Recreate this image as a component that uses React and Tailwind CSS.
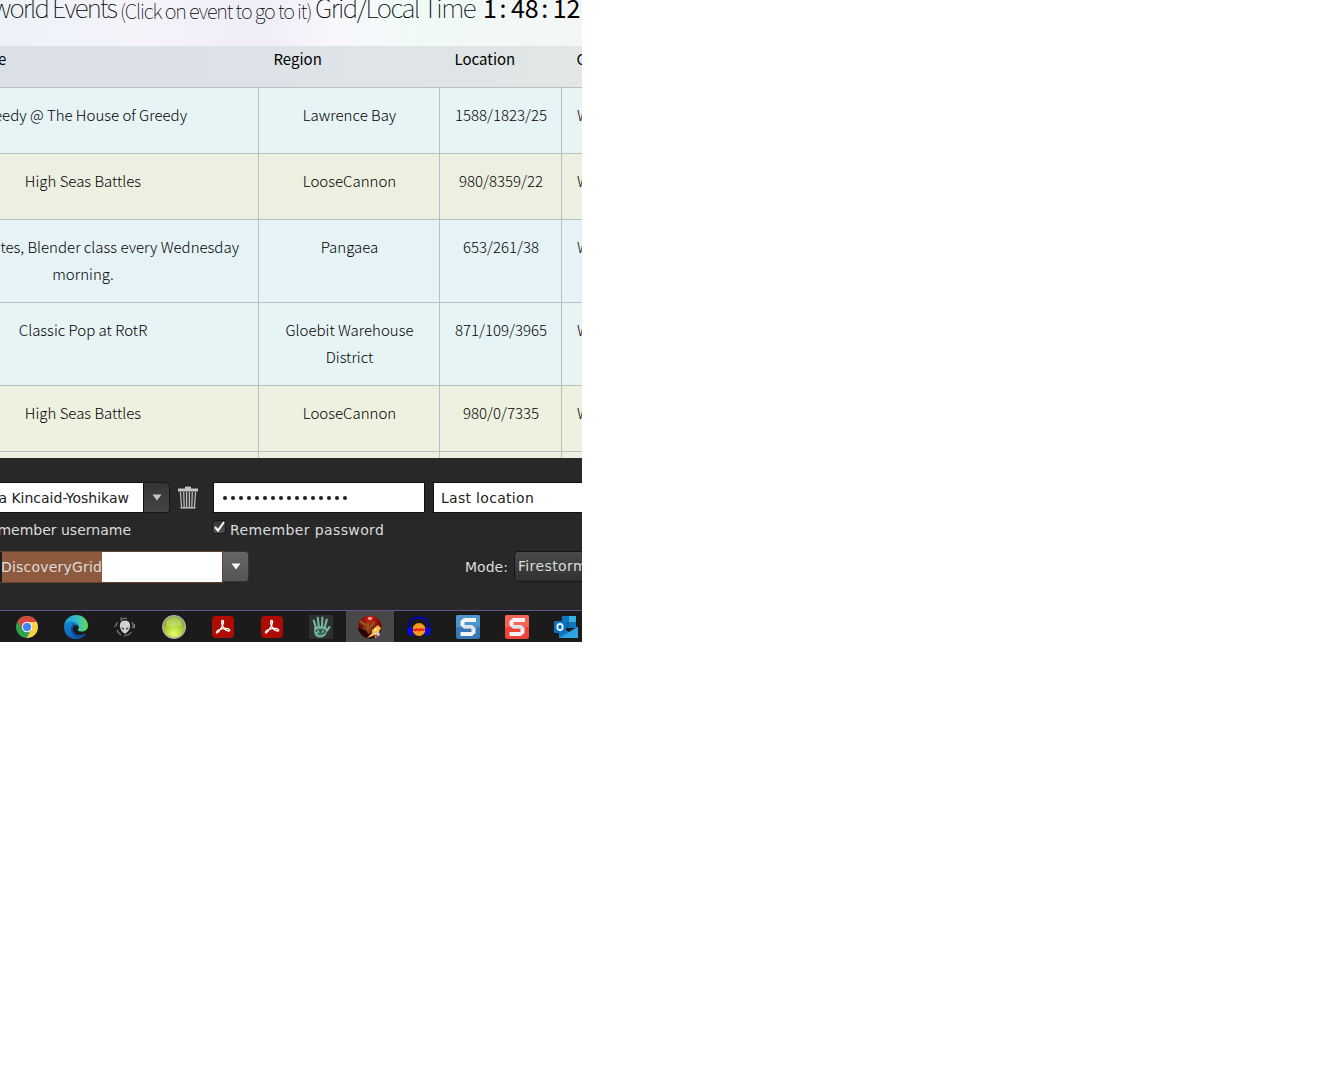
import React from "react";

const light = "font-['Noto_Sans_CJK_SC','Open_Sans',sans-serif] font-light";
const regular = "font-['Noto_Sans_CJK_SC','Open_Sans',sans-serif] font-normal";
const cell = "border-b border-r border-[#b9c1c0] pt-[13px] text-center text-[15px] leading-[27px] whitespace-nowrap";

const rows = [
  { name: ["eedy @ The House of Greedy"], pad: true, region: ["Lawrence Bay"], loc: "1588/1823/25", h: "h-[66px]", bg: "bg-[#e7f4f6]" },
  { name: ["High Seas Battles"], region: ["LooseCannon"], loc: "980/8359/22", h: "h-[66px]", bg: "bg-[#edf0e0]" },
  { name: ["tes, Blender class every Wednesday", "morning."], pad2: true, region: ["Pangaea"], loc: "653/261/38", h: "h-[83px]", bg: "bg-[#e6f3f6]" },
  { name: ["Classic Pop at RotR"], region: ["Gloebit Warehouse", "District"], loc: "871/109/3965", h: "h-[83px]", bg: "bg-[#e7f4f6]" },
  { name: ["High Seas Battles"], region: ["LooseCannon"], loc: "980/0/7335", h: "h-[66px]", bg: "bg-[#eef1df]" },
  { name: [], region: [], loc: "", h: "h-[7px]", bg: "bg-[#ebf1de]", last: true },
];

function EventRow({ r }) {
  return (
    <div className={`grid grid-cols-[351px_181px_122px_21px] ${r.h} ${r.bg} overflow-hidden`}>
      <div className={cell}>
        {r.name.map((t, i) => (
          <div key={t} className={i === 0 && r.pad ? "pr-[71px] text-right" : i === 0 && r.pad2 ? "pr-[19px] text-right" : ""}>{t}</div>
        ))}
      </div>
      <div className={`${cell} pl-px`}>{r.region.map((t) => <div key={t}>{t}</div>)}</div>
      <div className={`${cell} pl-px`}>{r.loc}</div>
      <div className="overflow-hidden border-b border-[#b9c1c0] pl-[15px] pt-[13px] text-[15px] leading-[27px]">{r.last ? "" : "W"}</div>
    </div>
  );
}

function Arrow({ fill }) {
  return (
    <svg width="10" height="7" viewBox="0 0 10 7"><path d="M0.5 0.5h9L5 6.5z" fill={fill} /></svg>
  );
}

function Trash() {
  return (
    <svg width="20" height="26" viewBox="0 0 20 26">
      <path d="M6 1.500h8v1H6z" fill="#111" />
      <path d="M7 2.500h6v2h7v3H0v-3h7z" fill="#c4c4c4" />
      <path d="M1.500 8.500L3 24h14l1.500-15.500" fill="#333" />
      <g fill="none" stroke="#bdbdbd" strokeWidth="1.200">
        <path d="M2.400 8l1.200 16M5.700 8l.5 15.500M8.600 8v15.500M11.400 8v15.500M14.300 8l-.5 15.500M17.600 8l-1.200 16" />
        <path d="M2.500 23.800h15" strokeWidth="1.500" />
      </g>
    </svg>
  );
}

function Chrome() {
  return (
    <svg width="22" height="22" viewBox="0 0 24 24">
      <circle cx="12" cy="12" r="12" fill="#2da14f" />
      <path d="M12 6.600H22.700A12 12 0 0 1 11.500 24L16.700 14.700z" fill="#fcce45" />
      <path d="M1.600 6L7.300 14.700L12 12V6.600H22.700A12 12 0 0 0 1.600 6z" fill="#d84a3d" />
      <circle cx="12" cy="12" r="5.600" fill="#fff" />
      <circle cx="12" cy="12" r="4.600" fill="#4284f3" />
    </svg>
  );
}

function Edge() {
  return (
    <svg width="24" height="24" viewBox="0 0 24 24">
      <defs>
        <linearGradient id="edgeTop" x1="0" y1="0.5" x2="1" y2="0.5"><stop offset="0" stopColor="#199ddb" /><stop offset=".55" stopColor="#35bfc7" /><stop offset="1" stopColor="#66d84e" /></linearGradient>
        <linearGradient id="edgeBody" x1="0" y1="0" x2="0.4" y2="1"><stop offset="0" stopColor="#1688d4" /><stop offset="1" stopColor="#0867b8" /></linearGradient>
      </defs>
      <path d="M0 11C1 4 6 0 12 0c7 0 12 5 12 10.500 0 4-3 6-6.500 6-3 0-4-1-3.500-2 1-1.500 1.500-3-.5-5C10 6 4 6 0 11z" fill="url(#edgeTop)" />
      <path d="M0 12C1 7 6 5.500 10 7c2.500 1 4 3 4 4-4-2-6 1-5.500 4 .7 5 7 7 13.500 3.500C20 22 16 24 12 24 5 24 0 19 0 12z" fill="url(#edgeBody)" />
      <path d="M9.500 8.500C5.500 12 6 19.500 12.500 23.700 17 23.500 20.500 21 22 18.500 15.500 22 9 20 8.500 15c-.3-3 1-5 4-4.800z" fill="#0c4f9c" />
    </svg>
  );
}

function Alien() {
  return (
    <svg width="22" height="22" viewBox="0 0 22 22">
      <g fill="none" stroke="#747a7b" strokeWidth="1.300">
        <path d="M7 3.500A9 9 0 0 1 13 2.500M18 6a9 9 0 0 1 1.500 5M17.500 16a9 9 0 0 1-5 3.500M7 19a9 9 0 0 1-4-5M2 10a9 9 0 0 1 1.500-4" />
        <path d="M7 1v4M20.500 8v4l-3-1M0 11l3-2M10 21l2-3" strokeWidth="1" />
      </g>
      <path d="M11 4.500c4.500 0 5.500 3.500 5 6.500-.3 2.500-3 6.500-5 6.500s-4.700-4-5-6.500c-.5-3 .5-6.500 5-6.500z" fill="#d2d2d2" />
      <path d="M7.500 11l2.500 1.200v1.800c-1.600 0-2.500-1.500-2.500-3zM14.500 11L12 12.200v1.800c1.600 0 2.500-1.500 2.500-3z" fill="#555959" />
    </svg>
  );
}

function GreenOrb() {
  return (
    <svg width="24" height="24" viewBox="0 0 24 24">
      <defs><radialGradient id="orb" cx=".5" cy=".8" r=".65"><stop offset="0" stopColor="#e7ff75" /><stop offset=".5" stopColor="#b7db3b" /><stop offset="1" stopColor="#83a91e" /></radialGradient></defs>
      <circle cx="12" cy="12" r="11.300" fill="url(#orb)" stroke="#a9aaa9" strokeWidth="1.500" />
      <path d="M4 10C3 0 21 0 20 10c-4 2-12 2-16 0z" fill="#d7e798" opacity=".5" />
    </svg>
  );
}

function Acrobat() {
  return (
    <svg width="22" height="22" viewBox="0 0 22 22">
      <rect width="22" height="22" rx="4" fill="#ae0c02" />
      <path d="M10 4.500c3-.8 1.200 5-1.500 8.500-2.500 4.500-4.500 4.500-4 3 .8-2.200 6-3.500 9-3.600 4-.2 5.500 2.600 3 2.600-3.500 0-8-6-6.500-10.500z" fill="none" stroke="#fff" strokeWidth="1.300" />
    </svg>
  );
}

function Hand() {
  return (
    <svg width="24" height="24" viewBox="0 0 24 24">
      <rect width="24" height="24" rx="1" fill="#2f3131" />
      <path d="M5 12.500q6-3 12.500 0l.5 4q-1 6-7 6-5.500 0-6-6z" fill="#6fae98" />
      <g fill="none" stroke="#79b7a1" strokeLinecap="round" strokeWidth="2.100">
        <path d="M7 13L4.800 5.500M9.800 12L8.800 2.800M13 12l.4-9.500M15.800 12.500l2-8M17.500 16l3-4" />
      </g>
      <path d="M6.500 16.500c2.500-3 7.500-3 10 0-2 3-6 3.500-7.500 2" fill="none" stroke="#2c4a43" strokeWidth="1.200" />
      <circle cx="11.500" cy="16.500" r="1.500" fill="#2c4a43" />
    </svg>
  );
}

function Phoenix() {
  return (
    <svg width="24" height="24" viewBox="0 0 24 24">
      <defs><radialGradient id="fire" cx=".5" cy=".2" r=".8"><stop offset="0" stopColor="#c9261c" /><stop offset=".5" stopColor="#8a0907" /><stop offset="1" stopColor="#280303" /></radialGradient></defs>
      <circle cx="12" cy="12" r="11.500" fill="url(#fire)" />
      <ellipse cx="12" cy="3.500" rx="2.200" ry="1.400" fill="#f5a898" />
      <path d="M0 13q5 2 9-1l4 4-2 7Q2 22 0 13z" fill="#2a0404" />
      <path d="M14 15l6-5 3 3-2 4-3 1-3 3-6 2 5-5z" fill="#f3bd42" />
      <path d="M17 13l2 .5-1 3-2-1z" fill="#fff1a0" />
      <path d="M1 4.500l7 4 2-2.500 2 3 5.500-3.500-1 5.500-3.500 3 .5 3-3 2-3-4-4-1 3-2-4-3z" fill="#853f14" />
      <path d="M2 6l6 4M17 7l-5 5M10 8v7" stroke="#b5692a" strokeWidth="1" />
      <path d="M16 18l5-1 1 3-5 3z" fill="#dfd4cc" />
      <path d="M15 20.500l5-1-1.500 2.500z" fill="#b02420" />
    </svg>
  );
}

function Audacity() {
  return (
    <svg width="24" height="22" viewBox="0 0 24 22">
      <ellipse cx="12" cy="13.500" rx="6.500" ry="6.500" fill="#f39b18" />
      <path d="M5.500 13.500l2-1 1 .5 1.500-1 2 1 2-1 1.500 1 1-.5 2 1-2 1.500-2-.5-2 1-2-1-2 1-2-1z" fill="#ed2018" />
      <path d="M2.700 15C0 5 6 1.500 12 1.500S24 5 21.300 15" fill="none" stroke="#0000b5" strokeWidth="1.800" />
      <path d="M1 12q5-3 5 2v6H3q-4-3-2-8zM23 12q-5-3-5 2v6H21q4-3 2-8z" fill="#0909e0" />
    </svg>
  );
}

function Snagit({ a, b }) {
  return (
    <svg width="24" height="24" viewBox="0 0 24 24">
      <rect width="24" height="24" rx="2" fill={b} />
      <path d="M2 0h20q2 0 2 2v10H0V2q0-2 2-2z" fill={a} />
      <path d="M20 3H8L4.500 6v4.500L8 13.500h7.500V17h-11v4H16l3.500-3v-5L16 10H8.500V7H20z" fill="#f2f3f5" />
      <path d="M4.500 10.500L8 13.500h7.500V17l4-3.500v-.5L16 10H8.500z" fill="#d4dce4" opacity=".6" />
    </svg>
  );
}

function Outlook() {
  return (
    <svg width="24" height="22" viewBox="0 0 24 22">
      <path d="M8 0h14v12H8z" fill="#1276bd" /><path d="M15 0h7v6h-7z" fill="#38b1e4" /><path d="M8 6h7v6H8z" fill="#0869ad" />
      <path d="M5 10l10 6 9-6v12H5z" fill="#1379c2" /><path d="M5 22l19-11v11z" fill="#2ca4dd" />
      <rect y="5" width="12" height="12" rx="1" fill="#0c72c5" />
      <ellipse cx="6" cy="11" rx="2.700" ry="3.100" fill="none" stroke="#fff" strokeWidth="1.700" />
    </svg>
  );
}

const icons = [
  <Chrome />, <Edge />, <Alien />, <GreenOrb />, <Acrobat />, <Acrobat />, <Hand />, <Phoenix />, <Audacity />,
  <Snagit a="#4e94cd" b="#3978b8" />, <Snagit a="#f16458" b="#ee4338" />, <Outlook />,
];

export default function App() {
  return (
    <div className="h-[1085px] w-[1329px] overflow-hidden bg-white">
      <div className="flex h-[642px] w-[582px] flex-col overflow-hidden bg-[#282828] text-black">
        <div className="flex h-[46px] shrink-0 items-start overflow-hidden whitespace-nowrap bg-[linear-gradient(90deg,#edf2f8_0%,#f4f3fa_25%,#efeef9_45%,#f8f7fb_58%,#effaf8_72%,#f4f6f6_100%)] font-['Noto_Sans_CJK_SC','Open_Sans',sans-serif] font-thin">
          <div className="-ml-[8px] -mt-[13px] w-[125px] shrink-0 text-[26px] leading-[40px] tracking-[-1.85px]">world Events</div>
          <div className="ml-[3px] -mt-[9px] w-[194px] shrink-0 text-[20px] leading-[40px] tracking-[-1.13px]">(Click on event to go to it)</div>
          <div className="ml-px -mt-[13px] w-[168px] shrink-0 text-[26px] leading-[40px] tracking-[-1.55px]">Grid/Local Time</div>
          <div className="-mt-[13px] shrink-0 text-[25px] font-normal leading-[40px]">
            1<span className="-ml-px mr-px inline-block w-[14px] text-center">:</span>48<span className="-ml-px mr-px inline-block w-[14px] text-center">:</span>12
          </div>
        </div>
        <div className={`-ml-[92px] h-[412px] w-[675px] shrink-0 overflow-hidden ${light}`}>
          <div className={`grid h-[42px] grid-cols-[351px_181px_122px_21px] border-b border-[#b9c1c0] bg-[linear-gradient(90deg,#d9e0e6,#dce2e7_50%,#e1e7e6)] text-[15px] leading-[26px] ${regular}`}>
            <div className="pl-[90px]">e</div>
            <div className="pl-[14.5px]">Region</div>
            <div className="pl-[14.5px]">Location</div>
            <div className="overflow-hidden pl-[14.5px]">C</div>
          </div>
          {rows.map((r, i) => <EventRow key={i} r={r} />)}
        </div>
        <div className="h-[152px] shrink-0 overflow-hidden whitespace-nowrap font-['DejaVu_Sans',sans-serif] text-[14px] text-[#dcdcdc]">
          <div className="flex h-[55px] items-start pt-[24px]">
            <div className="flex h-[31px] w-[144px] items-center justify-end border-y border-r border-[#111] bg-white pr-[14px] pt-[2px] text-[#222]">a Kincaid-Yoshikaw</div>
            <div className="flex h-[31px] w-[26px] items-center justify-center rounded-r border border-l-0 border-[#171717] bg-linear-to-b from-[#353535] to-[#454545]"><Arrow fill="#c8c8c8" /></div>
            <div className="ml-[8px] mt-[2px] w-[20px]"><Trash /></div>
            <div className="ml-[15px] flex h-[31px] w-[212px] items-center gap-[4px] border border-[#111] bg-white pl-[9px]">
              {Array.from({ length: 16 }, (_, i) => <span key={i} className="size-[4px] shrink-0 rounded-full bg-[#222]" />)}
            </div>
            <div className="ml-[8px] flex h-[31px] w-[149px] items-center border border-r-0 border-[#111] bg-white pl-[7px] pt-[2px] tracking-[0.3px] text-[#222]">Last location</div>
          </div>
          <div className="flex h-[38px] items-start pt-[7px]">
            <div className="flex w-[131px] justify-end leading-[20px]">member username</div>
            <div className="ml-[81px] flex size-[14px] items-center justify-center rounded-sm border border-[#151515] bg-linear-to-b from-[#333] to-[#555]">
              <svg className="shrink-0" width="12" height="12" viewBox="0 0 12 12"><path d="M2 6l3 3.500L11 1" fill="none" stroke="#fff" strokeWidth="2" /></svg>
            </div>
            <div className="ml-[4px] leading-[20px] tracking-[0.38px]">Remember password</div>
          </div>
          <div className="flex h-[59px] items-start">
            <div className="flex h-[32px] w-[223px] shrink-0 items-center border border-l-0 border-[#65432f] bg-white">
              <span className="h-full w-[2px] bg-[#1c1c1c]" />
              <span className="flex h-full w-[100px] items-center bg-[#8e5a3e] tracking-[0.2px] text-[#dedede] -indent-px">DiscoveryGrid</span>
            </div>
            <div className="flex h-[31px] w-[26px] shrink-0 items-center justify-center rounded-r border border-l-0 border-[#333] bg-linear-to-b from-[#666] to-[#555]"><Arrow fill="#fff" /></div>
            <div className="ml-[216px] shrink-0 leading-[32px]">Mode:</div>
            <div className="ml-[6px] h-[31px] w-[90px] shrink-0 overflow-hidden rounded-l border border-[#151515] bg-linear-to-b from-[#4a4a4a] to-[#303030] pl-[3px] leading-[29px] tracking-[0.4px]">Firestorm</div>
          </div>
        </div>
        <div className="flex h-[32px] w-[590px] shrink-0 border-t border-[#62548b] bg-[#1b1b1b]">
          <div className="w-[2px] shrink-0" />
          {icons.map((ic, i) => (
            <div key={i} className={`flex w-[49px] shrink-0 items-center justify-center ${i === 7 ? "border-l border-[#1b1b1b] bg-[#484848]" : ""}`}>{ic}</div>
          ))}
        </div>
      </div>
    </div>
  );
}
